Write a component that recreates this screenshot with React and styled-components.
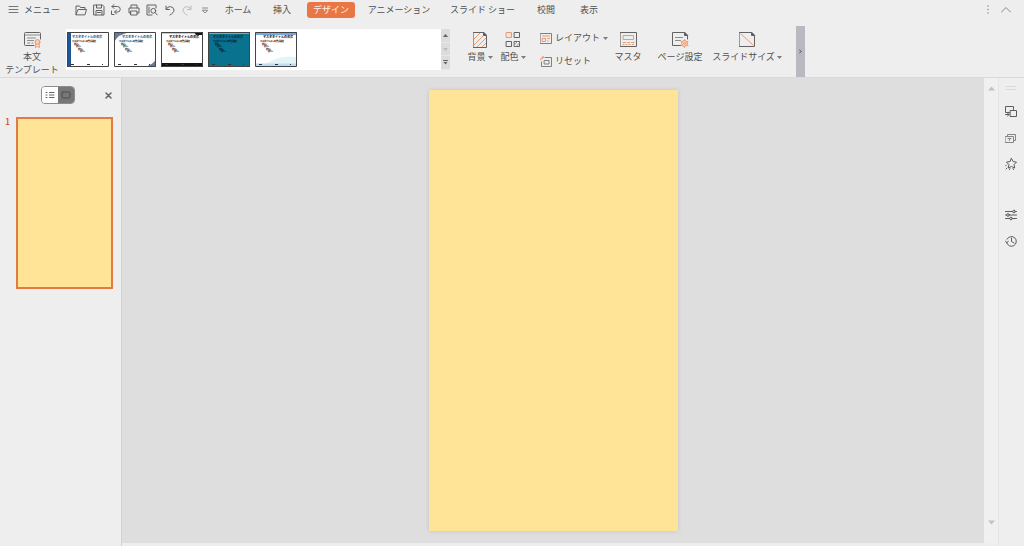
import React from 'react';
import styled, { createGlobalStyle } from 'styled-components';

const GlobalStyle = createGlobalStyle`
    * {
        box-sizing: border-box;
    }

    body {
        margin: 0;
        background: #eeeeee;
        color: #505050;
        font-family: "Noto Sans CJK JP", sans-serif;
        font-size: 9px;
        line-height: 12px;
    }

    button {
        margin: 0;
        padding: 0;
        border: 0;
        background: none;
        color: inherit;
        font: inherit;
        white-space: nowrap;
    }

    svg {
        display: block;
        flex: none;
    }
`;

const Page = styled.div`
    min-height: 100vh;
    display: flex;
    flex-direction: column;
`;

const TopBar = styled.header`
    height: 20px;
    padding: 0 12px 0 8px;
    display: flex;
    align-items: center;
`;

const MenuButton = styled.button`
    width: 67px;
    display: flex;
    align-items: center;
    gap: 4px;
`;

const QuickTools = styled.div`
    width: 136px;
    display: flex;
    align-items: center;
    justify-content: space-between;
`;

const Tabs = styled.nav`
    margin-left: 8px;
    flex: 1;
    display: flex;
`;

const Tab = styled.button`
    width: ${({ $width }) => $width}px;
    height: 16px;
    border-radius: 3px;
    background: ${({ $active }) => ($active ? '#e97645' : 'transparent')};
    color: ${({ $active }) => ($active ? '#fff3ec' : 'inherit')};
`;

const WindowTools = styled.div`
    display: flex;
    align-items: center;
    gap: 6px;
`;

const Ribbon = styled.section`
    height: 58px;
    padding-top: 6px;
    display: flex;
    align-items: flex-start;
    border-bottom: 1px solid #dadada;
`;

const TemplateButton = styled.button`
    width: 64px;
    padding-top: 6px;
    display: flex;
    flex-direction: column;
    align-items: center;
    line-height: 13px;
    white-space: pre-line;

    svg {
        margin-bottom: 2px;
    }
`;

const Gallery = styled.div`
    width: 384px;
    height: 41px;
    margin: 3px 16px 0 2px;
    display: flex;
    justify-content: space-between;
    background: #ffffff;
`;

const Thumbs = styled.div`
    padding: 3px 1px;
    display: flex;
    gap: 5px;
`;

const GalleryScroll = styled.div`
    width: 9px;
    display: flex;
    flex-direction: column;
    background: #dcdcdc;
`;

const ScrollStep = styled.button`
    flex: 1;
    display: flex;
    align-items: center;
    justify-content: center;
    border-bottom: 1px solid #e8e8e8;
`;

const Tools = styled.div`
    display: flex;
    align-items: flex-start;
    padding-top: 6px;
`;

const Tool = styled.button`
    width: ${({ $width }) => $width}px;
    display: flex;
    flex-direction: column;
    align-items: center;
    gap: 3px;
`;

const ToolLabel = styled.span`
    display: flex;
    align-items: center;
    gap: 2px;
`;

const ToolStack = styled.div`
    width: 68px;
    margin-left: 8px;
    display: flex;
    flex-direction: column;
    gap: 11px;
`;

const RowTool = styled.button`
    display: flex;
    align-items: center;
    gap: 3px;
`;

const RibbonHandle = styled.button`
    width: 9px;
    height: 51px;
    margin-left: 14px;
    display: flex;
    align-items: center;
    justify-content: center;
    background: #b8b9c1;
`;

const Workspace = styled.main`
    flex: 1;
    display: flex;
`;

const SlidePanel = styled.aside`
    width: 122px;
    border-right: 1px solid #d2d2d2;
`;

const PanelHead = styled.div`
    height: 39px;
    padding: 8px 8px 0 41px;
    display: flex;
    justify-content: space-between;
    align-items: flex-start;
`;

const ViewSwitch = styled.div`
    height: 18px;
    display: flex;
    border: 1px solid #8c8c8c;
    border-radius: 4px;
    overflow: hidden;
`;

const ViewButton = styled.button`
    width: 16px;
    display: flex;
    align-items: center;
    justify-content: center;
    background: ${({ $active }) => ($active ? '#777777' : '#ffffff')};
`;

const CloseButton = styled.button`
    height: 18px;
    display: flex;
    align-items: center;
`;

const SlideItem = styled.div`
    padding: 0 8px 0 5px;
    display: flex;
`;

const SlideNumber = styled.span`
    width: 11px;
    height: 9px;
    color: #d9521f;
    font-weight: 500;
    line-height: 9px;
`;

const SlidePreview = styled.button`
    flex: 1;
    aspect-ratio: 97 / 172;
    border: 2px solid #e27b42;
    background: #ffe498;
`;

const Center = styled.div`
    flex: 1;
    display: flex;
    border-bottom: 3px solid #eeeeee;
`;

const Canvas = styled.section`
    flex: 1;
    display: flex;
    justify-content: center;
    padding: 12px;
    background: #dedede;
`;

const Slide = styled.div`
    aspect-ratio: 249 / 441;
    background: #ffe498;
    box-shadow: 0 0 4px #c4c4cc;
`;

const ScrollTrack = styled.div`
    width: 14px;
    padding: 8px 0 18px;
    display: flex;
    flex-direction: column;
    align-items: center;
    justify-content: space-between;
    background: #f0f0f0;
`;

const SideTools = styled.aside`
    width: 26px;
    padding: 8px 1px 0 0;
    display: flex;
    flex-direction: column;
    align-items: center;
    gap: 14px;
    border-left: 1px solid #e6e6e6;
`;

const SideGap = styled.div`
    height: 11px;
`;

const line = { fill: 'none', stroke: '#626262', strokeWidth: 1, strokeLinecap: 'round', strokeLinejoin: 'round' };
const orange = '#e99a73';

function Icon({ size = 12, height = size, children, ...rest }) {
    return (
        <svg width={size} height={height} viewBox={`0 0 ${size} ${height}`} aria-hidden="true" {...line} {...rest}>
            {children}
        </svg>
    );
}

function Triangle({ up, color = '#7c7c7c', size = 5 }) {
    return (
        <svg width={size} height={size - 2} viewBox="0 0 5 3" aria-hidden="true">
            <path d={up ? 'M0 3h5L2.500 0z' : 'M0 0h5L2.500 3z'} fill={color} />
        </svg>
    );
}

const quickTools = [
    { name: '開く', icon: <><path d="M1 10.500V2h3.500l1 1.500H10V5" /><path d="M1 10.500 3 5.500h8.500l-1.500 5z" /></> },
    { name: '保存', icon: <><path d="M1 1h8.500L11 2.500V11H1z" /><path d="M3.500 1v3h5V1M3 11V6.500h6V11M4.500 8.500h3" /></> },
    { name: '書き出し', icon: <><path d="M2 2.500h5.500a2.700 2.700 0 0 1 0 5.500H5" /><path d="M4 .5 2 2.500l2 2M6.500 6 4.500 8l2 2" /><path d="M1.500 7v3.500H4" /></> },
    { name: '印刷', icon: <><path d="M3 4V1h6v3M3 9H1V4h10v5H9" /><path d="M3 7h6v4H3z" /></> },
    { name: '印刷プレビュー', icon: <><path d="M6 11H1V1h9v3M3 3v6" /><circle cx="7.3" cy="6.8" r="2.4" /><path d="m9.2 8.700 2.100 2.300" /></> },
    { name: '元に戻す', icon: <><path d="M2 2v3.500h3.500" /><path d="M2.300 5.200A4 4 0 0 1 10 6c0 2-1.500 3.500-4 5" /></> },
    { name: 'やり直す', color: '#bcbcbc', icon: <><path d="M10 2v3.500H6.500" /><path d="M9.700 5.200A4 4 0 0 0 2 6c0 2 1.500 3.500 4 5" /></> },
    { name: 'カスタマイズ', color: '#8a8a8a', icon: <path d="M3.500 4h5M3.500 6.500 6 9l2.500-2.500z" /> },
];

const tabs = [
    { label: 'ホーム', width: 38 },
    { label: '挿入', width: 50 },
    { label: 'デザイン', width: 48, active: true },
    { label: 'アニメーション', width: 88 },
    { label: 'スライド ショー', width: 79 },
    { label: '校閲', width: 48 },
    { label: '表示', width: 38 },
];

const themes = [
    { name: '青の帯', title: '#2b6298', paper: '#ffffff', shift: 0, art: <path d="M0 0h4v35H0z" fill="#1f5796" /> },
    {
        name: '青の角', title: '#2c5f83', paper: '#ffffff', shift: 3,
        art: <><path d="M0 0h17Q4 2 0 10z" fill="#687ba6" /><path d="M42 27v8H30q9-2 12-8z" fill="#687ba6" /></>,
    },
    {
        name: '黒の帯', title: '#151515', paper: '#ffffff', shift: 3,
        art: <><path d="M0 31h42v4H0zM33 0h9v3h-7z" fill="#141414" /><path d="M0 1h34" stroke="#999999" /></>,
    },
    { name: '青緑', title: '#102c35', paper: '#08728f', shift: 0, art: <path d="M0 1.500h42" stroke="#b39a67" strokeWidth="1" /> },
    {
        name: '水色', title: '#20242a', paper: '#ffffff', shift: 3,
        art: <><path d="M0 0h42v3H0z" fill="#79a9dc" /><path d="M12 31q14-8 29-6v9H12z" fill="#e3f4f6" /><path d="M1 31.500h40v3H1z" fill="#bcdcf3" /></>,
    },
];

function ThemeThumb({ theme }) {
    return (
        <button aria-label={theme.name}>
            <svg width="42" height="35" viewBox="0 0 42 35" fontFamily="'Noto Sans CJK JP', sans-serif">
                <path d="M0 0h42v35H0z" fill={theme.paper} />
                {theme.art}
                <g fontWeight="900" fill="#101010">
                    <text x={5 + theme.shift} y="6" fontSize="3" fill={theme.title}>マスタタイトルの書式</text>
                    <text x="5" y="10" fontSize="2">マスタテキストの書式設定</text>
                    <text x="7" y="13" fontSize="2">第2レ</text>
                    <text x="9" y="15" fontSize="2">第3レ</text>
                    <text x="11" y="18" fontSize="2">第4レ</text>
                    <text x="13" y="20" fontSize="2">第5レ</text>
                </g>
                <path d="M4 32.500h3M20 32.500h3M35 32.500h1" stroke="#333333" strokeWidth="1" />
                <path d="M.5.5h41v34H.5z" fill="none" stroke="#444444" />
            </svg>
        </button>
    );
}

const icons = {
    template: (
        <Icon size={17} height={16}>
            <path d="M10 13.500H1.500a1 1 0 0 1-1-1v-11a1 1 0 0 1 1-1h14a1 1 0 0 1 1 1V7" />
            <path d="M1 3h15M3.500 6h8M3.500 8.500h6M3.500 11H6M8 11h1" stroke="#8b8b8b" />
            <circle cx="13.500" cy="10" r="2.500" stroke={orange} fill="#f7cdb7" />
            <path d="m12 12-.5 3.500 2-1 2 1L15 12" stroke={orange} />
        </Icon>
    ),
    background: (
        <Icon size={14} height={16}>
            <path d="m1 7 6-6M1 13 11 3M4 15l9-9M9 15l4-4" stroke={orange} />
            <path d="M.5.5h10l3 3v12H.5z" />
            <path d="M10.500.5v3h3z" fill="#555555" />
        </Icon>
    ),
    colors: (
        <Icon size={16}>
            <path d="M1.500.5h5v5h-5z" stroke={orange} fill="#fae3d8" />
            <path d="M9.500.5h5v5h-5zM1.500 9.500h5v5h-5zM9.500 9.500h5v5h-5z" />
            <path d="m9.500 12.500 3-3M11 14.500l3.500-3.500" stroke="#999999" />
        </Icon>
    ),
    layout: (
        <Icon size={12} height={11}>
            <path d="M.5.5h11v10H.5z" stroke="#808080" />
            <path d="M2.500 3h7M2.500 5.500h3v3h-3zM7.500 5.500h2M7.500 8h1" stroke={orange} />
        </Icon>
    ),
    reset: (
        <Icon size={12} height={11}>
            <path d="M5 1.500h6.500v9h-10V6M4.500 4.500h4.500v3.500H4.500z" stroke="#808080" />
            <path d="M.5 4q0-3 3-3M2.500 0l1 1-1 1.500" stroke={orange} />
        </Icon>
    ),
    master: (
        <Icon size={17} height={16}>
            <path d="M.5.500h16v14H.5z" />
            <path d="M3.500 3.500h10v4h-10z" stroke={orange} />
            <path d="M3 10.500h2.500M7.500 10.500h2M11.500 10.500H14M3 12.500h1M6 12.500h1M9 12.500h1M12.500 12.500h1" stroke={orange} />
        </Icon>
    ),
    page: (
        <Icon size={17} height={16}>
            <path d="M9 13.500H.5V.5h12l3 3V7" />
            <path d="M12.500.5v3h3z" fill="#555555" />
            <path d="M3.500 5.500h7M3.500 8.500h5" stroke="#8b8b8b" />
            <circle cx="12.500" cy="11.500" r="3" stroke={orange} fill="#f6d5c4" />
            <circle cx="12.500" cy="11.500" r="1" stroke={orange} />
            <path d="M12.500 7.500v1M12.500 14.500v1M9 9.500l1 .5M15 13l1 .5M9 13.500l1-.5M15 10l1-.5" stroke={orange} />
        </Icon>
    ),
    size: (
        <Icon size={17} height={16}>
            <path d="M.5.5h12l3 3v11H.5z" />
            <path d="M12.500.5v3h3z" fill="#555555" />
            <path d="m2 2 12 11" stroke={orange} />
        </Icon>
    ),
};

const mainTools = [
    { label: '背景', icon: icons.background, menu: true, width: 28 },
    { label: '配色', icon: icons.colors, menu: true, width: 38 },
];

const pageTools = [
    { label: 'マスタ', icon: icons.master, width: 40 },
    { label: 'ページ設定', icon: icons.page, width: 64 },
    { label: 'スライドサイズ', icon: icons.size, menu: true, width: 70 },
];

const sideTools = [
    { name: '図形の切り替え', icon: <><path d="M4.500 6.500h-4v-6h8v3" /><path d="M5.500 4.500h6v6h-6z" /><path d="M.5 8.500H4M2.500 7l1.500 1.500L2.500 10" /></> },
    { name: 'テンプレート', color: '#858585', icon: <><path d="M.5 4.500h8v6h-8zM2.500 4.500v-2h8v6h-2" /><path d="M3 6.500h3M4.500 6.500v2" /></> },
    { name: 'アニメーション効果', icon: <><path d="m6.500.5 1.700 3.100 3.300.5-2.400 2.500.6 3.400-3.200-1.500L3.300 10l.6-3.400-2.400-2.500 3.300-.5z" /><path d="M1.500 7 .5 8M2 10l-1 1M5 10.500l-.5 1M8 10.500l.5 1" /></> },
    { name: 'プロパティ', icon: <><path d="M.5 2.500h7M10.500 2.500h1M.5 6h1M4.500 6h7M.5 9.500h4M7.500 9.500h4" /><circle cx="9" cy="2.500" r="1.300" /><circle cx="3" cy="6" r="1.300" /><circle cx="6" cy="9.500" r="1.300" /></> },
    { name: '履歴', icon: <><path d="M2 4.200a4.900 4.900 0 1 1-.4 3.300M.5 6l1.200 1.700L3.300 6.500" /><path d="M6.500 3v3.500L9 8" /></> },
];

function ToolButton({ tool }) {
    return (
        <Tool $width={tool.width}>
            {tool.icon}
            <ToolLabel>
                {tool.label}
                {tool.menu && <Triangle />}
            </ToolLabel>
        </Tool>
    );
}

function SideButton({ tool }) {
    return (
        <button aria-label={tool.name}>
            <Icon stroke={tool.color || '#5c5c5c'}>{tool.icon}</Icon>
        </button>
    );
}

export default function App() {
    return (
        <Page>
            <GlobalStyle />
            <TopBar>
                <MenuButton>
                    <Icon stroke="#777777"><path d="M1 2.500h9M1 5.500h9M1 8.500h9" /></Icon>
                    メニュー
                </MenuButton>
                <QuickTools>
                    {quickTools.map((tool) => (
                        <button key={tool.name} aria-label={tool.name}>
                            <Icon stroke={tool.color || '#626262'}>{tool.icon}</Icon>
                        </button>
                    ))}
                </QuickTools>
                <Tabs>
                    {tabs.map((tab) => (
                        <Tab key={tab.label} $width={tab.width} $active={tab.active}>{tab.label}</Tab>
                    ))}
                </Tabs>
                <WindowTools>
                    <button aria-label="その他">
                        <Icon><path d="M6 2v.1M6 5.500v.1M6 9v.1" strokeWidth="1.500" stroke="#888888" /></Icon>
                    </button>
                    <button aria-label="リボンを閉じる">
                        <Icon><path d="m1.500 8 4.500-4.500L10.500 8" stroke="#888888" /></Icon>
                    </button>
                </WindowTools>
            </TopBar>
            <Ribbon>
                <TemplateButton>
                    {icons.template}
                    {'本文\nテンプレート'}
                </TemplateButton>
                <Gallery>
                    <Thumbs>
                        {themes.map((theme) => <ThemeThumb key={theme.name} theme={theme} />)}
                    </Thumbs>
                    <GalleryScroll>
                        <ScrollStep aria-label="上へ"><Triangle up color="#606060" /></ScrollStep>
                        <ScrollStep aria-label="下へ"><Triangle color="#bdbdbd" /></ScrollStep>
                        <ScrollStep aria-label="すべて表示">
                            <Icon size={5}><path d="M.5.5h4" stroke="#606060" /><path d="M.5 2h4l-2 2.500z" fill="#606060" stroke="none" /></Icon>
                        </ScrollStep>
                    </GalleryScroll>
                </Gallery>
                <Tools>
                    {mainTools.map((tool) => <ToolButton key={tool.label} tool={tool} />)}
                    <ToolStack>
                        <RowTool>{icons.layout}レイアウト<Triangle /></RowTool>
                        <RowTool>{icons.reset}リセット</RowTool>
                    </ToolStack>
                    {pageTools.map((tool) => <ToolButton key={tool.label} tool={tool} />)}
                </Tools>
                <RibbonHandle aria-label="次へ">
                    <Icon size={5}><path d="m1.500 1 2 1.500-2 1.500" /></Icon>
                </RibbonHandle>
            </Ribbon>
            <Workspace>
                <SlidePanel>
                    <PanelHead>
                        <ViewSwitch>
                            <ViewButton aria-label="アウトライン">
                                <Icon size={10}><path d="M1 2.500h1M1 5h1M1 7.500h1M4.500 2.500H9M4.500 5H9M4.500 7.500H9" /></Icon>
                            </ViewButton>
                            <ViewButton $active aria-label="スライド">
                                <Icon size={10}><rect x="1" y="2" width="8" height="6" rx="1" stroke="#4e4e4e" /></Icon>
                            </ViewButton>
                        </ViewSwitch>
                        <CloseButton aria-label="閉じる">
                            <Icon size={9}><path d="m2 2 5 5M7 2 2 7" strokeWidth="1.500" /></Icon>
                        </CloseButton>
                    </PanelHead>
                    <SlideItem>
                        <SlideNumber>1</SlideNumber>
                        <SlidePreview aria-label="スライド 1" />
                    </SlideItem>
                </SlidePanel>
                <Center>
                    <Canvas>
                        <Slide />
                    </Canvas>
                    <ScrollTrack>
                        <Triangle up color="#c2c2c2" size={7} />
                        <Triangle color="#c2c2c2" size={7} />
                    </ScrollTrack>
                </Center>
                <SideTools>
                    <Icon size={12} height={6}><path d="M1 .5h10M1 3.500h10" stroke="#dadada" /></Icon>
                    {sideTools.slice(0, 3).map((tool) => <SideButton key={tool.name} tool={tool} />)}
                    <SideGap />
                    {sideTools.slice(3).map((tool) => <SideButton key={tool.name} tool={tool} />)}
                </SideTools>
            </Workspace>
        </Page>
    );
}
